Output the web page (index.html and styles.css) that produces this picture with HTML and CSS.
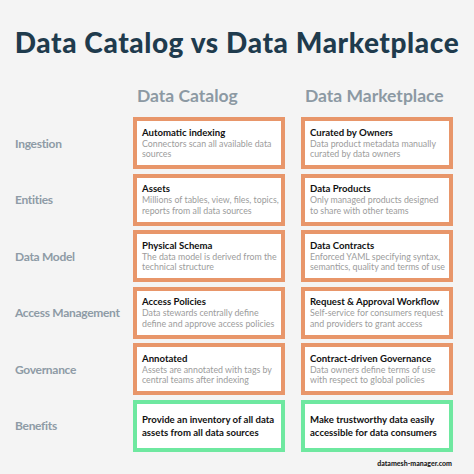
FILE: index.html
```html
<!DOCTYPE html>
<html>
<head>
<meta charset="utf-8">
<link rel="stylesheet" href="styles.css">
</head>
<body>
<div class="page">
  <h1 class="title">Data Catalog vs Data Marketplace</h1>
  <div class="grid">
    <div class="label"></div>
    <div class="colhead">Data Catalog</div>
    <div class="colhead">Data Marketplace</div>

    <div class="label">Ingestion</div>
    <div class="box"><div class="bt">Automatic indexing</div><div class="bd">Connectors scan all available data<br>sources</div></div>
    <div class="box"><div class="bt">Curated by Owners</div><div class="bd">Data product metadata manually<br>curated by data owners</div></div>

    <div class="label">Entities</div>
    <div class="box"><div class="bt">Assets</div><div class="bd">Millions of tables, view, files, topics,<br>reports from all data sources</div></div>
    <div class="box"><div class="bt">Data Products</div><div class="bd">Only managed products designed<br>to share with other teams</div></div>

    <div class="label">Data Model</div>
    <div class="box"><div class="bt">Physical Schema</div><div class="bd">The data model is derived from the<br>technical structure</div></div>
    <div class="box"><div class="bt">Data Contracts</div><div class="bd">Enforced YAML specifying syntax,<br>semantics, quality and terms of use</div></div>

    <div class="label">Access Management</div>
    <div class="box"><div class="bt">Access Policies</div><div class="bd">Data stewards centrally define<br>define and approve access policies</div></div>
    <div class="box"><div class="bt">Request &amp; Approval Workflow</div><div class="bd">Self-service for consumers request<br>and providers to grant access</div></div>

    <div class="label">Governance</div>
    <div class="box"><div class="bt">Annotated</div><div class="bd">Assets are annotated with tags by<br>central teams after indexing</div></div>
    <div class="box"><div class="bt">Contract-driven Governance</div><div class="bd">Data owners define terms of use<br>with respect to global policies</div></div>

    <div class="label">Benefits</div>
    <div class="box green"><div class="bb">Provide an inventory of all data<br>assets from all data sources</div></div>
    <div class="box green"><div class="bb">Make trustworthy data easily<br>accessible for data consumers</div></div>
  </div>
  <div class="footer">datamesh-manager.com</div>
</div>
</body>
</html>
```

FILE: styles.css
```css
html, body {
  margin: 0;
  padding: 0;
  background: #f4f4f4;
}
.page {
  width: 474px;
  height: 474px;
  box-sizing: border-box;
  padding-top: 26px;
  font-family: "Lato", "Inter", sans-serif;
}
.title {
  margin: 0;
  text-align: center;
  font-size: 28px;
  line-height: 32px;
  font-weight: 900;
  color: #1f3b4d;
  letter-spacing: 0.6px;
}
.grid {
  margin-top: 19.5px;
  display: grid;
  grid-template-columns: 102px 152px 152px;
  grid-template-rows: 35px repeat(6, 52px);
  column-gap: 16px;
  row-gap: 4.5px;
  padding-left: 15px;
}
.colhead {
  font-size: 17.5px;
  font-weight: 700;
  color: #8c99a3;
  padding-left: 4px;
  letter-spacing: 0;
  align-self: center;
  white-space: nowrap;
}
.label {
  font-size: 12px;
  font-weight: 700;
  color: #8e9ba6;
  align-self: center;
  white-space: nowrap;
  letter-spacing: -0.3px;
}
.box {
  background: #fff;
  border: 4px solid #e8966a;
  box-sizing: border-box;
  padding: 0 1px 0 5px;
  display: flex;
  flex-direction: column;
  justify-content: center;
  white-space: nowrap;
}
.box.green {
  border-color: #6ee8a0;
}
.bt {
  font-size: 9.6px;
  font-weight: 700;
  color: #111;
  line-height: 12px;
}
.bd {
  font-size: 8.8px;
  color: #9c9c9c;
  line-height: 10.5px;
}
.bb {
  font-size: 9.6px;
  font-weight: 700;
  color: #111;
  line-height: 13px;
}
.footer {
  text-align: right;
  padding-right: 22px;
  margin-top: 6px;
  font-size: 7px;
  line-height: 10px;
  font-weight: 900;
  color: #222;
}
```
